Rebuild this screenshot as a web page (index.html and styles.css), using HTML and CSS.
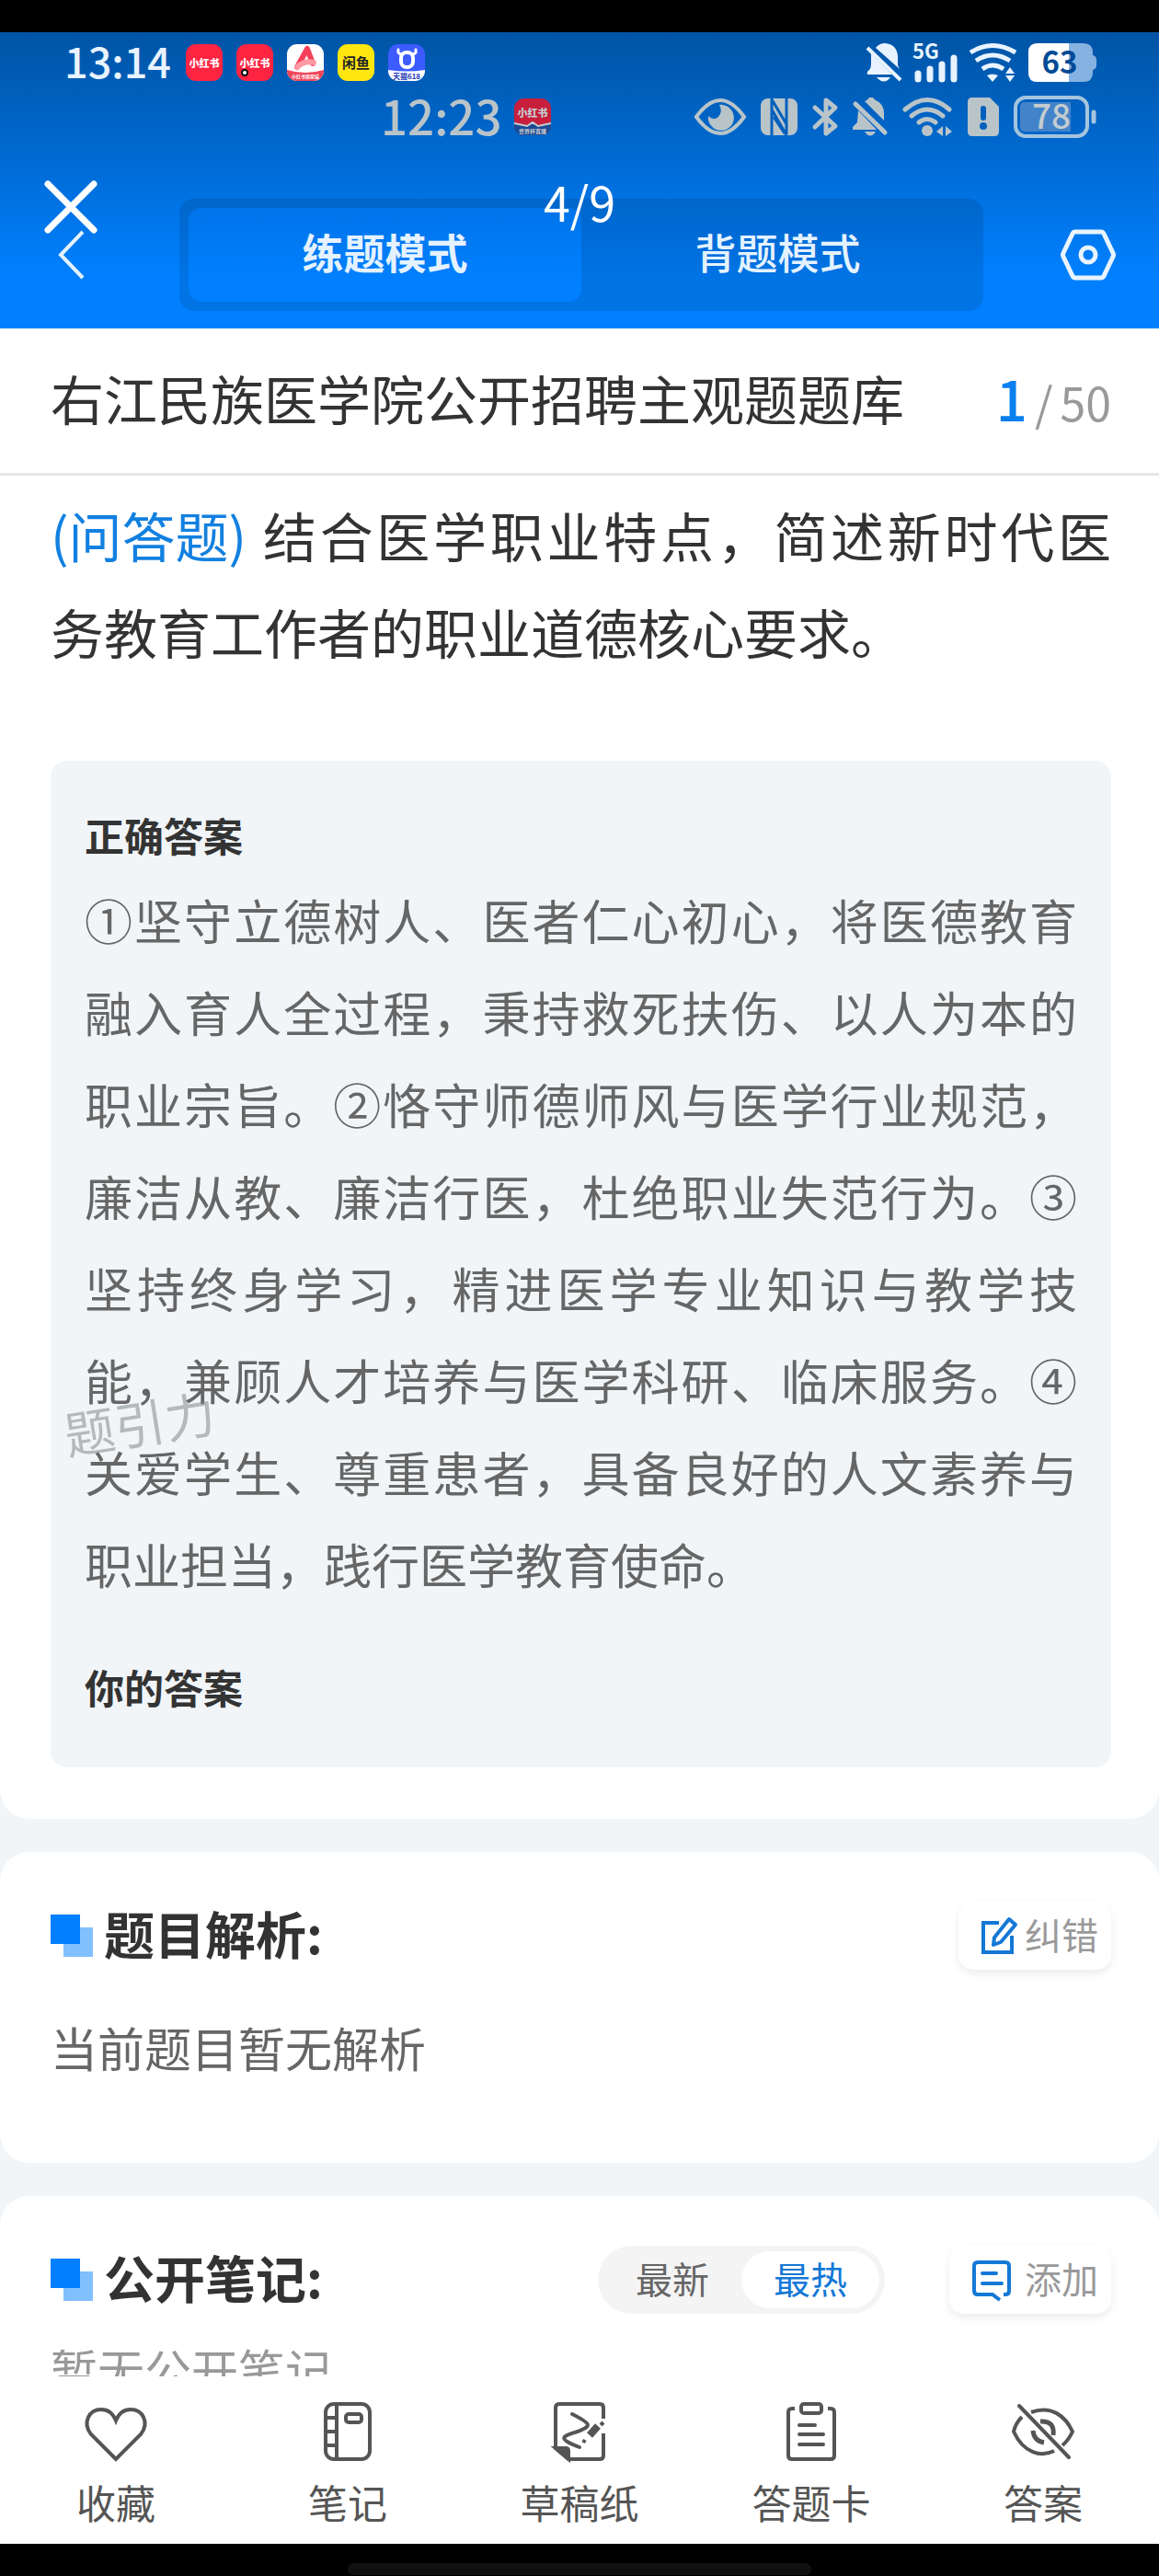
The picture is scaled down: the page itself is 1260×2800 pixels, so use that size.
FILE: index.html
```html
<!DOCTYPE html>
<html lang="zh-CN">
<head>
  <meta charset="UTF-8">
  <meta name="viewport" content="width=device-width, initial-scale=1">
  <title>右江民族医学院公开招聘主观题题库</title>
  <link rel="stylesheet" href="styles.css">
</head>
<body>

  <!-- 顶部 -->
  <header class="header">
    <div class="status">
      <span class="status-time">13:14</span>
      <div class="apps">
        <svg class="app" viewBox="0 0 40 40">
          <rect width="40" height="40" rx="11" fill="#ff2442"/>
          <text x="20" y="25" text-anchor="middle" font-size="11" font-weight="900" fill="#fff">小红书</text>
        </svg>
        <svg class="app" viewBox="0 0 40 40">
          <rect width="40" height="40" rx="11" fill="#ff2442"/>
          <text x="20" y="25" text-anchor="middle" font-size="11" font-weight="900" fill="#fff">小红书</text>
          <circle cx="9" cy="31" r="4" fill="#111"/>
          <circle cx="9" cy="31" r="2" fill="#fff"/>
        </svg>
        <svg class="app" viewBox="0 0 40 40">
          <rect width="40" height="40" rx="11" fill="#fff"/>
          <path d="M0 28q20 6 40 0v1a11 11 0 0 1-11 11H11A11 11 0 0 1 0 29z" fill="#f2455a"/>
          <path d="M11 25L22 5L28 21" fill="none" stroke="#f5405a" stroke-width="6" stroke-linecap="round" stroke-linejoin="round"/>
          <path d="M11 25Q19 17 29 20" fill="none" stroke="#ff9aa5" stroke-width="6" stroke-linecap="round"/>
          <text x="20" y="37" text-anchor="middle" font-size="5" font-weight="700" fill="#fff">小红书商家端</text>
        </svg>
        <svg class="app" viewBox="0 0 40 40">
          <rect width="40" height="40" rx="11" fill="#ffe60f"/>
          <text x="20" y="26" text-anchor="middle" font-size="15" font-weight="700" fill="#222">闲鱼</text>
        </svg>
        <svg class="app" viewBox="0 0 40 40">
          <rect width="40" height="40" rx="11" fill="#3d5cff"/>
          <path d="M0 28q20 3 40 0v1a11 11 0 0 1-11 11H11A11 11 0 0 1 0 29z" fill="#fff"/>
          <rect x="14" y="9" width="13" height="16" rx="6" fill="none" stroke="#fff" stroke-width="4"/>
          <path d="M11 6q-1 5 4 5M30 6q1 5-4 5" fill="none" stroke="#fff" stroke-width="3" stroke-linecap="round"/>
          <text x="20" y="38" text-anchor="middle" font-size="8" font-weight="700" fill="#2338b5">天猫618</text>
        </svg>
      </div>
      <div class="status-icons">
        <svg width="40" height="42" viewBox="0 0 40 42">
          <path d="M11 5Q15 0 21 0Q34 1 35 14V24L37 28zM6 11L29 34H2Q1 31 4 29Q6 27 6 22z" fill="#e8f3ff"/>
          <path d="M2 5L38 40" stroke="#e8f3ff" stroke-width="4"/>
          <path d="M12 37H27Q20 46 12 37z" fill="#e8f3ff"/>
        </svg>
        <svg width="50" height="42" viewBox="0 0 50 42">
          <text x="0" y="17" font-size="22" font-weight="700" fill="#e8f3ff">5G</text>
          <path d="M6 33v6M19 28v11M32 23v16M45 16v23" stroke="#e8f3ff" stroke-width="7" stroke-linecap="round"/>
        </svg>
        <svg width="54" height="42" viewBox="0 0 54 42">
          <g fill="none" stroke="#e8f3ff" stroke-width="5">
            <path d="M2 10Q26-5 51 10"/>
            <path d="M8 19Q26 7 45 19"/>
            <path d="M15 28Q26 20 38 28"/>
          </g>
          <path d="M20 35Q26 32 32 35L26 42zM40 33l5-7 5 7zM40 35l5 7 5-7z" fill="#e8f3ff"/>
        </svg>
        <svg width="74" height="42" viewBox="0 0 74 42">
          <path d="M10 0H60Q70 0 70 10V13Q74 14 74 18V24Q74 28 70 29V32Q70 42 60 42H10Q0 42 0 32V10Q0 0 10 0z" fill="#86b2e2"/>
          <path d="M10 0H44V42H10Q0 42 0 32V10Q0 0 10 0z" fill="#fff"/>
          <text x="34" y="33" text-anchor="middle" font-size="33" font-weight="700" fill="#004a96">63</text>
        </svg>
      </div>
    </div>

    <div class="status status-inner">
      <span class="status-time">12:23</span>
      <svg class="app" viewBox="0 0 40 40">
        <rect width="40" height="40" rx="11" fill="#c81f3c"/>
        <path d="M0 26L14 30L20 27L26 30L40 26V30A10 10 0 0 1 30 40H10A10 10 0 0 1 0 30z" fill="#1d4a94"/>
        <path d="M0 27l14 3 6-4 6 4 14-3" fill="none" stroke="#c4ccd0" stroke-width="2"/>
        <text x="20" y="20" text-anchor="middle" font-size="11" font-weight="900" fill="#c4ccd0">小红书</text>
        <text x="20" y="38" text-anchor="middle" font-size="6" font-weight="700" fill="#c4ccd0">世界杯直播</text>
      </svg>
      <div class="status-icons">
        <svg width="56" height="40" viewBox="0 0 56 40">
          <path d="M2 20Q28-16 54 20Q28 56 2 20z" fill="none" stroke="#b9c4c9" stroke-width="4"/>
          <path d="M27 7A14 14 0 1 1 15 19Q20 25 26 20Q31 14 27 7z" fill="#b9c4c9"/>
        </svg>
        <svg width="40" height="40" viewBox="0 0 40 40">
          <rect width="40" height="40" rx="8" fill="#b9c4c9"/>
          <path d="M12 40V1L28 28M12 12L28 40M28 0V39" fill="none" stroke="#0060bd" stroke-width="3"/>
          <path d="M14 20L26 38" stroke="#0060bd" stroke-width="3"/>
        </svg>
        <svg width="28" height="42" viewBox="0 0 28 42">
          <path d="M3 11L25 31L15 39V3L25 11L3 32" fill="none" stroke="#b9c4c9" stroke-width="5" stroke-linecap="round" stroke-linejoin="round"/>
        </svg>
        <svg width="38" height="42" viewBox="0 0 38 42">
          <path d="M13 4Q16 3 18 0H22Q24 3 27 4Q34 8 34 17V25zM6 14L26 35H0V32L5 27z" fill="#b9c4c9"/>
          <path d="M3 7L35 38" stroke="#b9c4c9" stroke-width="5" stroke-linecap="round"/>
          <path d="M13 37H25Q19 46 13 37z" fill="#b9c4c9"/>
        </svg>
        <svg width="55" height="42" viewBox="0 0 55 42">
          <g fill="none" stroke="#b9c4c9" stroke-width="5" stroke-linecap="round">
            <path d="M3 13Q27-8 51 13"/>
            <path d="M10 20Q27 6 44 20"/>
            <path d="M18 27Q27 20 36 27"/>
          </g>
          <circle cx="27" cy="36" r="6" fill="#b9c4c9"/>
          <path d="M37 37l7-6v11zM47 31l7 6-7 5z" fill="#b9c4c9"/>
        </svg>
        <svg width="34" height="42" viewBox="0 0 34 42">
          <path d="M5 0H24L34 10V37Q34 42 29 42H5Q0 42 0 37V5Q0 0 5 0z" fill="#b9c4c9"/>
          <path d="M17 12V22" stroke="#0060bd" stroke-width="6" stroke-linecap="round"/>
          <circle cx="17" cy="31" r="4" fill="#0060bd"/>
        </svg>
        <svg width="90" height="46" viewBox="0 0 90 46">
          <rect x="2" y="2" width="78" height="42" rx="11" fill="none" stroke="#a5c4de" stroke-width="4"/>
          <path d="M12 7H62V39H12Q7 39 7 34V12Q7 7 12 7z" fill="#4283c9"/>
          <path d="M87 18v10" stroke="#a5c4de" stroke-width="5" stroke-linecap="round"/>
          <text x="41" y="36" text-anchor="middle" font-size="37" font-weight="500" fill="#c4ccd0">78</text>
        </svg>
      </div>
    </div>

    <div class="toolbar">
      <button class="icon-btn back" aria-label="返回">
        <svg width="30" height="54" viewBox="0 0 30 54">
          <path d="M27 2L3 27L27 52" fill="none" stroke="#e4f2ff" stroke-width="4"/>
        </svg>
      </button>
      <div class="modes">
        <button class="mode active">练题模式</button>
        <button class="mode">背题模式</button>
      </div>
      <button class="icon-btn" aria-label="设置">
        <svg width="60" height="56" viewBox="0 0 60 56">
          <path d="M16 3H44Q46 3 47 5L57 26Q58 28 57 30L47 51Q46 53 44 53H16Q14 53 13 51L3 30Q2 28 3 26L13 5Q14 3 16 3z" fill="none" stroke="#e8f4ff" stroke-width="5"/>
          <circle cx="30" cy="28" r="8" fill="none" stroke="#e8f4ff" stroke-width="5"/>
        </svg>
      </button>
    </div>

    <!-- 图片查看器浮层 -->
    <button class="icon-btn viewer-close" aria-label="关闭">
      <svg width="58" height="58" viewBox="0 0 58 58">
        <path d="M4 4L54 54M54 4L4 54" stroke="#fff" stroke-width="7" stroke-linecap="round"/>
      </svg>
    </button>
    <span class="viewer-count">4/9</span>
  </header>

  <div class="title-bar">
    <h1>右江民族医学院公开招聘主观题题库</h1>
    <div class="progress"><span class="current">1</span><span>/</span><span>50</span></div>
  </div>

  <!-- 内容 -->
  <main class="content">
    <section class="card question-card">
      <p class="question"><span class="type">(问答题)</span>结合医学职业特点，简述新时代医务教育工作者的职业道德核心要求。</p>
      <div class="answer-box">
        <h2>正确答案</h2>
        <p>①坚守立德树人、医者仁心初心，将医德教育融入育人全过程，秉持救死扶伤、以人为本的职业宗旨。②恪守师德师风与医学行业规范，廉洁从教、廉洁行医，杜绝职业失范行为。③坚持终身学习，精进医学专业知识与教学技能，兼顾人才培养与医学科研、临床服务。④关爱学生、尊重患者，具备良好的人文素养与职业担当，践行医学教育使命。</p>
        <h2>你的答案</h2>
        <span class="watermark">题引力</span>
      </div>
    </section>

    <section class="card">
      <div class="card-head">
        <span class="marker"></span>
        <h2>题目解析:</h2>
        <button class="small-btn">
          <svg width="40" height="42" viewBox="0 0 40 42">
            <path d="M20 7H3V39H34V21" fill="none" stroke="#1478d6" stroke-width="4"/>
            <path d="M31 3L38 9L22 28L14 31L15 23z" fill="none" stroke="#1478d6" stroke-width="4" stroke-linejoin="round"/>
          </svg>
          <span>纠错</span>
        </button>
      </div>
      <p class="analysis">当前题目暂无解析</p>
    </section>

    <section class="card">
      <div class="card-head">
        <span class="marker"></span>
        <h2>公开笔记:</h2>
        <div class="sort">
          <button>最新</button>
          <button class="active">最热</button>
        </div>
        <button class="small-btn add-btn">
          <svg width="44" height="42" viewBox="0 0 44 42">
            <path d="M35 37H37Q41 37 41 33V6Q41 2 37 2H7Q3 2 3 6V33Q3 37 7 37H23L31 43" fill="none" stroke="#1478d6" stroke-width="4"/>
            <path d="M12 14H27M12 25H33" stroke="#1478d6" stroke-width="4" stroke-linecap="round"/>
          </svg>
          <span>添加</span>
        </button>
      </div>
      <p class="notes">暂无公开笔记</p>
    </section>
  </main>

  <!-- 底部菜单 -->
  <nav class="bottom-nav">
    <button>
      <svg viewBox="0 0 64 64">
        <path d="M32 62L5 35C-5 22 3 8 16 8Q27 8 32 20Q37 8 48 8C61 8 69 22 59 35z"/>
      </svg>
      收藏
    </button>
    <button>
      <svg viewBox="0 0 64 64">
        <rect x="8" y="2" width="48" height="60" rx="9"/>
        <path d="M20 2V62M8 17H20M8 32H20M8 47H20"/>
        <rect x="30" y="13" width="17" height="9" rx="3"/>
      </svg>
      笔记
    </button>
    <button>
      <svg viewBox="0 0 64 64">
        <path d="M58 18V6Q58 2 54 2H10Q6 2 6 6V50L20 62H54Q58 62 58 58V34"/>
        <path d="M6 50H17Q20 50 20 53V62z" fill="#555"/>
        <path d="M24 13C46 24 45 26 30 32C10 38 10 40 32 49" stroke-linecap="round"/>
        <path d="M43 36L52 26" stroke-width="8"/>
        <path d="M55 22L58 25M38 41L36 44"/>
      </svg>
      草稿纸
    </button>
    <button>
      <svg viewBox="0 0 64 64">
        <path d="M14 7H11Q7 7 7 11V58Q7 62 11 62H53Q57 62 57 58V11Q57 7 53 7H50"/>
        <rect x="21" y="2" width="22" height="10" rx="3"/>
        <path d="M19 25H36M19 35H45M19 46H45" stroke-linecap="round"/>
      </svg>
      答题卡
    </button>
    <button>
      <svg class="wide" viewBox="0 0 70 64">
        <path d="M22 11C44 3 59 15 67 32Q63 41 56 47M12 16Q5 23 3 32C14 56 33 60 47 53"/>
        <path d="M32 21Q48 20 46 36M24 31Q25 42 36 44" stroke-width="5"/>
        <path d="M9 4L63 60" stroke-linecap="round"/>
      </svg>
      答案
    </button>
  </nav>
  <div class="home-bar"><span></span></div>

</body>
</html>
```

FILE: styles.css
```css
* {
  box-sizing: border-box;
}

body {
  margin: 0;
  height: 100vh;
  display: flex;
  flex-direction: column;
  background-color: #f1f5f8;
  color: #333;
  font-family: "Noto Sans CJK SC", sans-serif;
}

h1, h2, p {
  margin: 0;
}

button {
  border: none;
  padding: 0;
  background: none;
  color: inherit;
  font-family: inherit;
  cursor: pointer;
}

svg {
  display: block;
  flex-shrink: 0;
  overflow: visible;
}

/* Header */
.header {
  position: relative;
  flex-shrink: 0;
  border-top: 35px solid #000;
  padding-bottom: 19px;
  background: linear-gradient(#0054a4, #0080ff 265px);
}

.status {
  display: flex;
  align-items: center;
  height: 65px;
  padding: 0 68px 0 70px;
  color: #e8f3ff;
}

.status-time {
  padding-bottom: 4px;
  font-size: 45px;
  line-height: 50px;
  font-weight: 500;
}

.apps {
  display: flex;
  gap: 15px;
  margin-left: 16px;
}

.app {
  width: 40px;
  height: 40px;
}

.status-icons {
  display: flex;
  align-items: center;
  gap: 11px;
  margin-left: auto;
}

.status-inner {
  height: 54px;
  padding-left: 414px;
  color: #b9c4c9;
}

.status-inner .status-time {
  font-size: 51px;
}

.status-inner .app {
  margin-left: 14px;
}

.status-inner .status-icons {
  gap: 16px;
}

.toolbar {
  display: flex;
  align-items: center;
  justify-content: space-between;
  margin-top: 62px;
  padding: 0 47px 0 63px;
}

.icon-btn {
  display: flex;
}

.modes {
  display: flex;
  flex: 1;
  margin: 0 84px 0 102px;
  padding: 10px;
  border-radius: 16px;
  background-color: rgba(0, 0, 0, 0.1);
}

.mode {
  flex: 1;
  height: 102px;
  padding-bottom: 8px;
  border-radius: 14px;
  color: #e4f2ff;
  font-size: 45px;
  font-weight: 500;
}

.mode.active {
  background: linear-gradient(#0074ea, #0080ff 80px);
  font-weight: 700;
}

.viewer-close {
  position: absolute;
  left: 48px;
  top: 161px;
}

.viewer-count {
  position: absolute;
  left: 0;
  right: 0;
  top: 154px;
  text-align: center;
  color: #fff;
  font-size: 52px;
  line-height: 60px;
  pointer-events: none;
}

/* Title */
.title-bar {
  display: flex;
  flex-shrink: 0;
  align-items: center;
  justify-content: space-between;
  height: 160px;
  padding: 0 52px 8px 55px;
  background-color: #fff;
  border-bottom: 3px solid #e5e5e5;
}

.title-bar h1 {
  font-size: 58px;
  font-weight: 400;
}

.progress {
  display: flex;
  align-items: baseline;
  gap: 8px;
  color: #999;
  font-size: 50px;
}

.progress .current {
  color: #0a80f0;
  font-size: 60px;
  font-weight: 500;
}

/* Content */
.content {
  flex: 1;
  min-height: 0;
  overflow: hidden;
}

.card {
  margin-bottom: 36px;
  padding: 54px 52px 84px 55px;
  background-color: #fff;
  border-radius: 32px;
}

.question-card {
  padding-top: 12px;
  padding-bottom: 56px;
  border-radius: 0 0 32px 32px;
}

.question {
  font-size: 58px;
  line-height: 105px;
  text-align: justify;
}

.question .type {
  display: inline-block;
  margin-right: 14px;
  color: #1280e0;
}

.answer-box {
  position: relative;
  margin-top: 88px;
  padding: 50px 37px 58px;
  border-radius: 18px;
  background-color: #f1f5f8;
}

.answer-box h2 {
  font-size: 43px;
  line-height: 60px;
}

.answer-box p {
  margin: 13px 0 53px;
  color: #666;
  font-size: 52px;
  line-height: 100px;
  text-align: justify;
}

.watermark {
  position: absolute;
  left: 14px;
  top: 678px;
  color: rgba(130, 134, 138, 0.55);
  font-size: 55px;
  line-height: 80px;
  transform: rotate(-9deg);
}

.card-head {
  display: flex;
  align-items: center;
}

.card-head h2 {
  margin-left: 12px;
  padding-bottom: 8px;
  font-size: 55px;
  line-height: 66px;
}

.marker {
  width: 46px;
  height: 46px;
  background:
    linear-gradient(#0080ff, #0080ff) 0 0 / 32px 32px no-repeat,
    linear-gradient(#80c0ff, #80c0ff) 100% 100% / 32px 32px no-repeat;
}

.small-btn {
  display: flex;
  align-items: center;
  gap: 8px;
  height: 74px;
  margin-left: auto;
  padding: 0 14px 0 24px;
  border-radius: 16px;
  box-shadow: 0 4px 10px rgba(0, 0, 0, 0.08);
  color: #999;
  font-size: 40px;
}

.small-btn span {
  padding-bottom: 4px;
}

.add-btn {
  gap: 14px;
  margin-left: 70px;
}

.analysis {
  margin-top: 44px;
  padding-bottom: 2px;
  color: #666;
  font-size: 51px;
  line-height: 80px;
}

.sort {
  display: flex;
  margin-left: auto;
  padding: 6px;
  border-radius: 37px;
  background-color: #f4f4f4;
}

.sort button {
  width: 150px;
  height: 62px;
  padding-bottom: 4px;
  border-radius: 31px;
  color: #666;
  font-size: 40px;
}

.sort button.active {
  background-color: #fff;
  color: #1478d6;
}

.notes {
  margin-top: 20px;
  color: #999;
  font-size: 51px;
  line-height: 80px;
}

/* Bottom nav */
.bottom-nav {
  display: grid;
  grid-template-columns: repeat(5, 1fr);
  flex-shrink: 0;
  height: 182px;
  background-color: #fff;
}

.bottom-nav button {
  display: flex;
  flex-direction: column;
  align-items: center;
  gap: 14px;
  padding-top: 28px;
  color: #555;
  font-size: 43px;
  line-height: 60px;
}

.bottom-nav svg {
  width: 64px;
  height: 64px;
  fill: none;
  stroke: #555;
  stroke-width: 4;
}

.bottom-nav svg.wide {
  width: 70px;
}

.home-bar {
  display: flex;
  flex-shrink: 0;
  justify-content: center;
  align-items: center;
  height: 35px;
  padding-top: 19px;
  background-color: #000;
}

.home-bar span {
  width: 40%;
  height: 13px;
  border-radius: 7px;
  background-color: #111;
}
```
